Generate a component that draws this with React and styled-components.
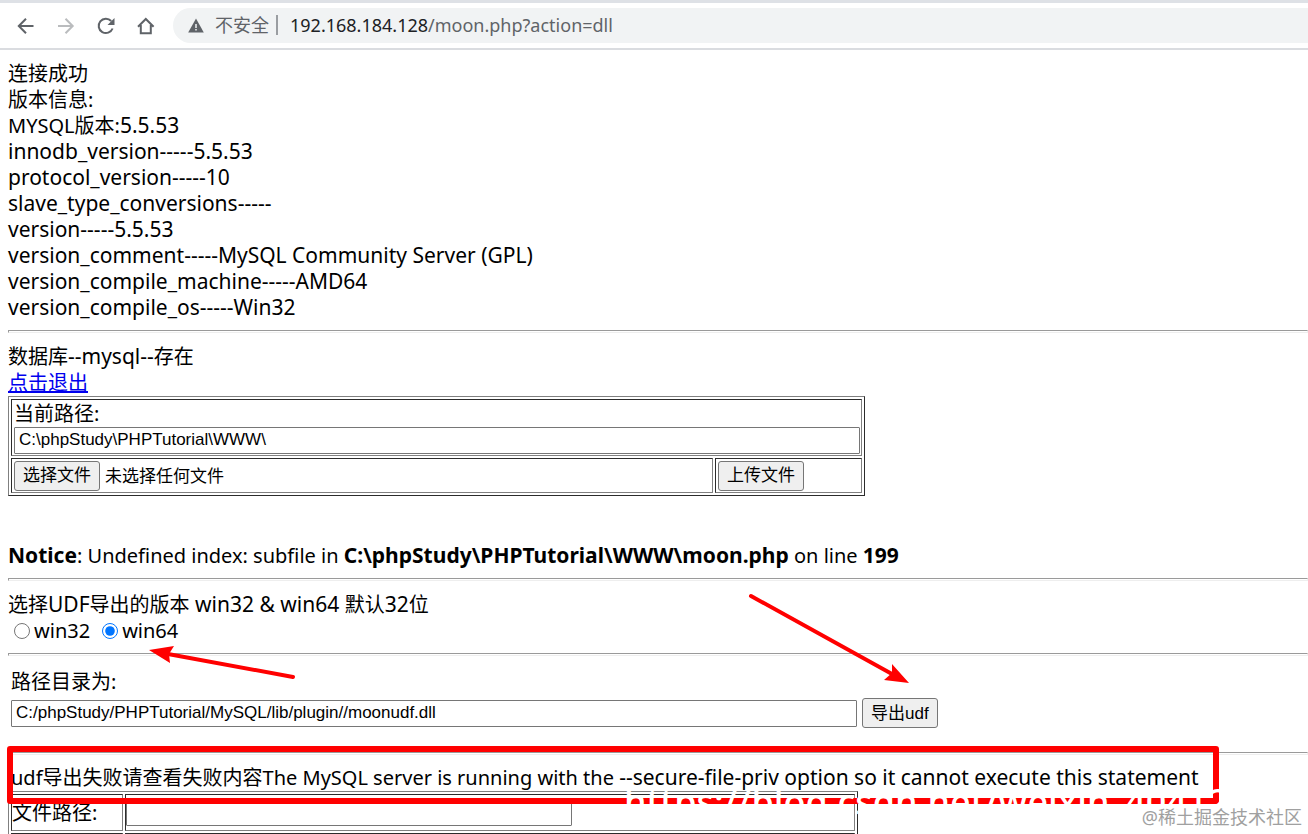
import React, { useRef, useState } from "react";
import styled, { createGlobalStyle } from "styled-components";

const GlobalStyle = createGlobalStyle`
  * { box-sizing: border-box; }
  body {
    margin: 0;
    background: #fff;
    color: #000;
    font-family: "Noto Sans", "Noto Sans CJK SC", sans-serif;
    font-size: 20px;
    line-height: 26px;
  }
`;

const Window = styled.div`
  position: relative;
  height: 100vh;
  overflow: hidden;
`;

const Toolbar = styled.header`
  display: flex;
  align-items: center;
  height: 50px;
  padding-left: 16px;
  border-top: 3px solid #dee1e6;
  border-bottom: 2px solid #dadce0;
`;

const NavButton = styled.button`
  display: flex;
  align-items: center;
  justify-content: center;
  width: 20px;
  height: 20px;
  margin-right: 20px;
  padding: 0;
  border: 0;
  background: none;
  color: ${(p) => (p.disabled ? "#babcbe" : "#5f6368")};
`;

const AddressBar = styled.div`
  display: flex;
  flex: 1;
  align-items: center;
  height: 35px;
  margin-left: -3px;
  padding: 0 0 1px 15px;
  border-radius: 18px 0 0 18px;
  background: #f1f3f4;
  color: #5f6368;
  font-size: 18px;
`;

const Security = styled.span`
  margin-left: 11px;
  padding-right: 7px;
  border-right: 2px solid #9a9da1;
  line-height: 20px;
`;

const Url = styled.span`
  margin-left: 12px;
`;

const Host = styled.span`
  color: #202124;
`;

const Page = styled.main`
  padding: 11px 0 0 8px;
`;

const Line = styled.div`
  white-space: nowrap;
`;

const Latin = styled.span`
  font-size: 21px;
  line-height: 20px;
`;

const Strong = styled.b`
  font-size: 21px;
  line-height: 20px;
`;

const Rule = styled.hr`
  height: 3px;
  margin: ${(p) => p.$top || 9}px 0 ${(p) => p.$bottom || 11}px;
  border: 1px solid;
  border-color: #9a9a9a #eee #eee #9a9a9a;
`;

const ExitLink = styled.a`
  color: #0000ee;
`;

const Grid = styled.table`
  width: ${(p) => p.$width}px;
  border: 1px solid;
  border-color: #808080 #2c2c2c #2c2c2c #808080;
  border-spacing: 2px;
  border-collapse: separate;
`;

const Cell = styled.td`
  width: ${(p) => (p.$width ? `${p.$width}px` : "auto")};
  height: ${(p) => (p.$height ? `${p.$height}px` : "auto")};
  padding: 1px 1px 1px ${(p) => (p.$height ? 0 : 2)}px;
  border: 1px solid;
  border-color: #2c2c2c #808080 #808080 #2c2c2c;
`;

const TextField = styled.input`
  display: block;
  width: ${(p) => p.$width}px;
  height: 27px;
  padding: 0 4px 1px;
  border: 1px solid #767676;
  border-radius: 1px;
  font-family: "Liberation Sans", sans-serif;
  font-size: 17px;
`;

const Button = styled.button`
  height: 30px;
  padding: 1px 8px 0;
  border: 1px solid #767676;
  border-radius: 3px;
  background: #efefef;
  color: #000;
  font-family: "Liberation Sans", "Noto Sans CJK SC", sans-serif;
  font-size: 17px;
  line-height: 26px;
`;

const FileRow = styled.div`
  display: flex;
  align-items: center;
  gap: 5px;
  height: 31px;
  font-size: 17px;
`;

const Notice = styled.div`
  margin-top: 47px;
  white-space: nowrap;
`;

const Choices = styled.div`
  display: flex;
  gap: 12px;
  padding-left: 6px;
`;

const Choice = styled.label`
  display: flex;
  align-items: center;
  gap: 4px;
`;

const Radio = styled.input`
  width: 16px;
  height: 16px;
  margin: 0;
  accent-color: #0075ff;
`;

const ExportForm = styled.form`
  padding-left: 3px;
`;

const ExportRow = styled.div`
  display: flex;
  align-items: center;
  gap: 5px;
  margin-top: 3px;
`;

const Result = styled.section`
  position: relative;
`;

const ResultText = styled.div`
  padding-left: 3px;
  white-space: nowrap;
`;

const Frame = styled.div`
  position: absolute;
  top: -19px;
  left: -1px;
  width: 1212px;
  height: 58px;
  border: 6px solid #ff0000;
  border-radius: 3px;
`;

const BlogMark = styled.div`
  position: absolute;
  top: 15px;
  left: 616px;
  color: #fff;
  font-size: 36px;
  font-weight: 500;
  line-height: 44px;
  white-space: nowrap;
`;

const Arrows = styled.svg`
  position: absolute;
  top: 0;
  left: 0;
  pointer-events: none;
`;

const SiteMark = styled.div`
  position: absolute;
  right: 6px;
  bottom: 4px;
  color: #a0a0a0;
  font-size: 18px;
  text-shadow: 1px 1px 0 #fff;
`;

const serverVariables = [
  "innodb_version-----5.5.53",
  "protocol_version-----10",
  "slave_type_conversions-----",
  "version-----5.5.53",
  "version_comment-----MySQL Community Server (GPL)",
  "version_compile_machine-----AMD64",
  "version_compile_os-----Win32",
];

function NavIcon({ children }) {
  return (
    <svg width="20" height="20" viewBox="0 0 20 20" fill="none" stroke="currentColor" strokeWidth="2">
      {children}
    </svg>
  );
}

function BrowserBar() {
  return (
    <Toolbar>
      <NavButton aria-label="后退">
        <NavIcon><path d="M17.5 10H3M10 2.8 2.8 10l7.2 7.2" /></NavIcon>
      </NavButton>
      <NavButton aria-label="前进" disabled>
        <NavIcon><path d="M2 10h14.500M9.500 2.800 16.700 10l-7.200 7.200" /></NavIcon>
      </NavButton>
      <NavButton aria-label="重新加载">
        <NavIcon>
          <path d="M16.600 12.500A7.200 7.200 0 1 1 15.200 5" />
          <path d="M18.500 2v7h-7z" fill="currentColor" stroke="none" />
        </NavIcon>
      </NavButton>
      <NavButton aria-label="主页">
        <NavIcon><path d="M2 10.700 9.800 3l7.800 7.700M4.800 9v8.200h10V9" /></NavIcon>
      </NavButton>
      <AddressBar>
        <svg width="16" height="15" viewBox="0 0 16 15">
          <path d="M8 .5 15.800 14.500H.2z" fill="#5f6368" />
          <path d="M8 6v4M8 11v1.500" stroke="#f1f3f4" strokeWidth="1.500" />
        </svg>
        <Security>不安全</Security>
        <Url><Host>192.168.184.128</Host>/moon.php?action=dll</Url>
      </AddressBar>
    </Toolbar>
  );
}

function UploadTable() {
  const picker = useRef(null);
  const [fileName, setFileName] = useState("未选择任何文件");
  return (
    <Grid $width={857}>
      <tbody>
        <tr>
          <Cell colSpan={2}>
            <label htmlFor="current-path">当前路径:</label>
            <TextField id="current-path" $width={846} defaultValue={"C:\\phpStudy\\PHPTutorial\\WWW\\"} />
          </Cell>
        </tr>
        <tr>
          <Cell>
            <FileRow>
              <input
                ref={picker}
                type="file"
                hidden
                aria-label="选择文件"
                onChange={(e) => setFileName(e.target.files[0]?.name || "未选择任何文件")}
              />
              <Button type="button" onClick={() => picker.current.click()}>选择文件</Button>
              <span>{fileName}</span>
            </FileRow>
          </Cell>
          <Cell $width={147}>
            <FileRow><Button type="submit">上传文件</Button></FileRow>
          </Cell>
        </tr>
      </tbody>
    </Grid>
  );
}

export default function App() {
  return (
    <Window>
      <GlobalStyle />
      <BrowserBar />
      <Page>
        <Line>连接成功</Line>
        <Line>版本信息:</Line>
        <Line>MYSQL版本:<Latin>5.5.53</Latin></Line>
        {serverVariables.map((text) => <Line key={text}><Latin>{text}</Latin></Line>)}
        <Rule />
        <Line>数据库<Latin>--mysql--</Latin>存在</Line>
        <Line><ExitLink href="#exit">点击退出</ExitLink></Line>
        <UploadTable />
        <Notice>
          <Strong>Notice</Strong>: Undefined index: subfile in <Strong>C:\phpStudy\PHPTutorial\WWW\moon.php</Strong> on line <Strong>199</Strong>
        </Notice>
        <Rule />
        <Line>选择<Latin>UDF</Latin>导出的版本<Latin> win32 &amp; win64 </Latin>默认<Latin>32</Latin>位</Line>
        <Choices>
          <Choice><Radio type="radio" name="arch" />win32</Choice>
          <Choice><Radio type="radio" name="arch" defaultChecked />win64</Choice>
        </Choices>
        <Rule $bottom={13} />
        <ExportForm onSubmit={(e) => e.preventDefault()}>
          <label htmlFor="dll-path">路径目录为:</label>
          <ExportRow>
            <TextField id="dll-path" $width={846} defaultValue="C:/phpStudy/PHPTutorial/MySQL/lib/plugin//moonudf.dll" />
            <Button type="submit">导出udf</Button>
          </ExportRow>
        </ExportForm>
        <Rule $top={24} $bottom={10} />
        <Result>
          <ResultText>
            udf导出失败请查看失败内容The MySQL server is running with the <Latin>--secure-file-priv option so it cannot execute this statement</Latin>
          </ResultText>
          <Grid $width={850}>
            <tbody>
              <tr>
                <Cell $width={112} $height={37}><label htmlFor="file-path">文件路径:</label></Cell>
                <Cell $height={37}><TextField id="file-path" $width={446} /></Cell>
              </tr>
              <tr>
                <Cell $height={37} />
                <Cell $height={37} />
              </tr>
            </tbody>
          </Grid>
          <Frame />
          <BlogMark>https://blog.csdn.net/weixin_40412</BlogMark>
        </Result>
      </Page>
      <Arrows width="960" height="720" viewBox="0 0 960 720" fill="#ff0000" stroke="#ff0000" aria-hidden="true">
        <path d="M293 677 168 654M751 596 892 674" strokeWidth="4" strokeLinecap="round" />
        <path d="M149 650 174 646 169 654 170 663zM909 683 892 664 892 673 884 680z" stroke="none" />
      </Arrows>
      <SiteMark>@稀土掘金技术社区</SiteMark>
    </Window>
  );
}
